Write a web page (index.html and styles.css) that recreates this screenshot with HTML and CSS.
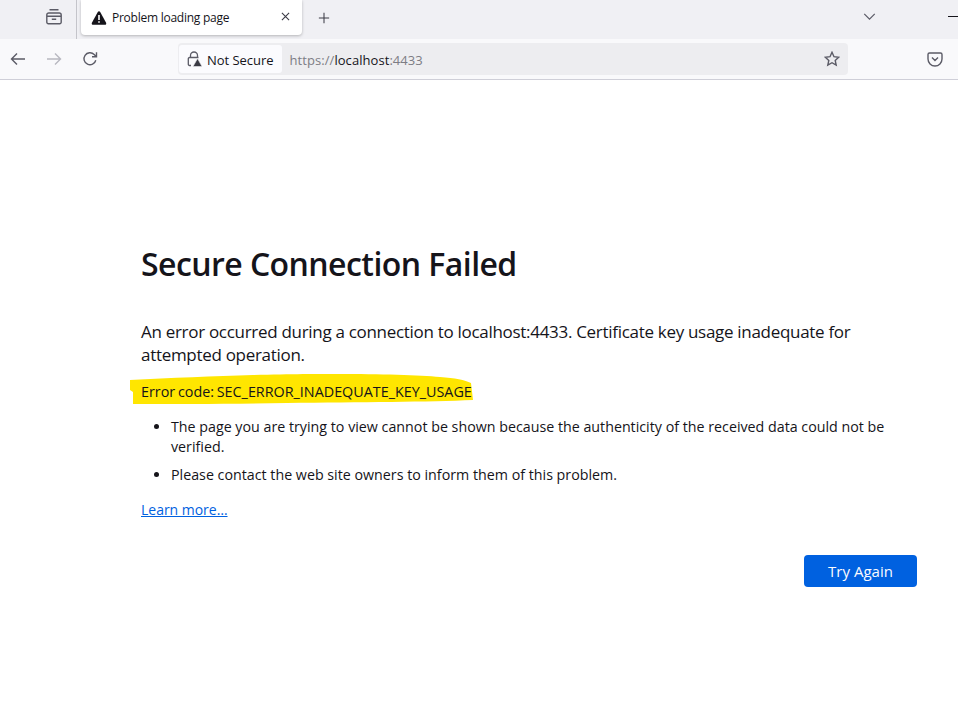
FILE: index.html
```html
<!DOCTYPE html>
<html lang="en">
<head>
<meta charset="utf-8">
<title>Problem loading page</title>
<link rel="stylesheet" href="styles.css">
</head>
<body>
<header class="chrome">
  <div class="tabbar">
    <div class="tabs-left">
      <svg class="ico view-icon" viewBox="0 0 16 16"><path d="M3.500 .8h9M.8 6v7.200a1.500 1.500 0 0 0 1.500 1.500h11.400a1.500 1.500 0 0 0 1.500-1.500V6a2 2 0 0 0-2-2H2.800a2 2 0 0 0-2 2zM.8 7.200h14.400M5.800 10.200h4.400"/></svg>
    </div>
    <div class="tab-sep"></div>
    <div class="tab">
      <svg class="warn" viewBox="0 0 16 16"><path class="warn-fill" d="M8 1.2c-.5 0-.9.3-1.200.7L.9 12.700c-.5 1 .1 2.100 1.200 2.100h11.800c1.100 0 1.700-1.100 1.200-2.100L9.200 1.900C8.900 1.500 8.500 1.200 8 1.200z"/><path class="warn-mark" d="M7.200 5h1.600v5H7.200zM7.200 11.200h1.600v1.600H7.200z"/></svg>
      <span class="tab-title">Problem loading page</span>
      <svg class="ico tab-close" viewBox="0 0 10 10"><path d="M1 1l8 8M9 1l-8 8"/></svg>
    </div>
    <svg class="ico new-tab" viewBox="0 0 14 14"><path d="M7 1v12M1 7h12"/></svg>
    <div class="spacer"></div>
    <svg class="ico chevron" viewBox="0 0 14 8"><path d="M1 1l6 6 6-6"/></svg>
    <div class="minimize"></div>
  </div>
  <nav class="navbar">
    <svg class="ico nav-btn back" viewBox="0 0 16 16"><path d="M15 8H1.500M7 2.500L1.500 8 7 13.500"/></svg>
    <svg class="ico nav-btn forward" viewBox="0 0 16 16"><path d="M1 8h13.500M9 2.500L14.500 8 9 13.500"/></svg>
    <svg class="ico nav-btn reload" viewBox="0 0 16 16"><path d="M13.800 9.300A6 6 0 1 1 12.200 3.500L14.200 5.500M14.500 1.200v4.500H10"/></svg>
    <div class="urlbar">
      <div class="identity">
        <svg class="lock" viewBox="0 0 16 16"><path class="lock-line" d="M4.500 6.500V4.500a3.500 3.500 0 0 1 7 0v2M5 14.500H3.500a1.200 1.200 0 0 1-1.200-1.200V7.700a1.200 1.200 0 0 1 1.200-1.200h9"/><path class="lock-warn" d="M11.500 7.500l4.500 8H7z"/></svg>
        <span class="identity-label">Not Secure</span>
      </div>
      <div class="url"><span class="dim">https://</span><span class="host">localhost</span><span class="dim">:4433</span></div>
      <svg class="ico star" viewBox="0 0 16 16"><path d="M8 1.300l2 4.400 4.700.5-3.500 3.200 1 4.700L8 11.700l-4.200 2.400 1-4.700L1.300 6.200 6 5.700z"/></svg>
    </div>
    <svg class="ico pocket" viewBox="0 0 16 16"><path d="M2.500 2h11A1.500 1.500 0 0 1 15 3.500V8a7 7 0 0 1-14 0V3.500A1.500 1.500 0 0 1 2.500 2zM5 6.500l3 3 3-3"/></svg>
  </nav>
</header>
<main class="page">
  <h1 class="title">Secure Connection Failed</h1>
  <p class="lead">An error occurred during a connection to localhost:4433. Certificate key usage inadequate for attempted operation.</p>
  <p class="code">
    <svg class="marker" viewBox="0 0 345 32" preserveAspectRatio="none"><path d="M0 6 C40 4 85 2 123 1 C160 0 190 0 207 0 C250 0 290 1 310 3 C325 4 335 6 341 9 L343 26 C300 28 230 28 157 29 C100 30 50 30 3 30 L3 18 L0 16z"/></svg>
    <span class="code-text">Error code: SEC_ERROR_INADEQUATE_KEY_USAGE</span>
  </p>
  <ul class="reasons">
    <li>The page you are trying to view cannot be shown because the authenticity of the received data could not be verified.</li>
    <li>Please contact the web site owners to inform them of this problem.</li>
  </ul>
  <a class="learn" href="#">Learn more…</a>
  <div class="actions"><button class="retry" type="button">Try Again</button></div>
</main>
</body>
</html>
```
FILE: styles.css
```css
* { box-sizing: border-box; }
html, body { margin: 0; height: 100%; }
body {
  background: #fff;
  color: #15141a;
  font-family: "Open Sans", "Noto Sans", sans-serif;
  overflow: hidden;
}
.ico { fill: none; stroke: #5b5b66; stroke-width: 1.4; flex: none; }

.tabbar {
  height: 39px;
  background: #f0f0f4;
  display: flex;
  align-items: flex-start;
}
.tabs-left { width: 76px; display: flex; justify-content: flex-end; padding: 9px 14px 0 0; }
.view-icon { width: 16px; height: 16px; }
.tab-sep { width: 1px; height: 39px; background: #c4c4ca; margin-right: 4px; }
.tab {
  width: 221px;
  height: 35px;
  background: #fff;
  border-radius: 0 0 4px 4px;
  box-shadow: 0 1px 3px rgba(0,0,0,.25);
  display: flex;
  align-items: center;
  padding: 0 12px 0 10px;
}
.warn { width: 16px; height: 16px; flex: none; margin-right: 5px; }
.warn-fill { fill: #15141a; }
.warn-mark { fill: #fff; }
.tab-title { font-size: 12px; flex: 1; letter-spacing: -.25px; }
.tab-close { width: 9px; height: 9px; stroke: #3a3a44; stroke-width: 1.2; margin-top: -2px; }
.new-tab { width: 12px; height: 12px; margin: 12px 0 0 16px; stroke-width: 1.200; stroke: #3a3a44; }
.spacer { flex: 1; }
.chevron { width: 13px; height: 7px; margin: 13px 72px 0 0; }
.minimize { width: 10px; height: 1px; background: #15141a; margin-top: 16px; }

.navbar {
  height: 41px;
  background: #f9f9fb;
  border-bottom: 1px solid #cfcfd8;
  display: flex;
  align-items: center;
  padding: 0 15px 0 0;
}
.nav-btn { width: 16px; height: 16px; margin-left: 10px; }
.back { margin-left: 10px; }
.forward { margin-left: 20px; stroke: #b8b8c0; }
.reload { margin-left: 20px; }
.urlbar {
  margin-left: 80px;
  width: 671px;
  height: 32px;
  background: #ededf0;
  border-radius: 4px;
  display: flex;
  align-items: center;
  padding: 0 8px 0 1px;
}
.identity {
  height: 28px;
  background: #fbfbfe;
  border-radius: 3px;
  display: flex;
  align-items: center;
  padding: 0 8px 0 7px;
}
.lock { width: 16px; height: 16px; margin-right: 5px; }
.lock-line { fill: none; stroke: #5b5b66; stroke-width: 1.3; }
.lock-warn { fill: #3a3a44; stroke: #ededf0; stroke-width: .6; }
.identity-label { font-size: 13px; letter-spacing: -.03px; padding-top: 1px; }
.url { flex: 1; font-size: 13px; letter-spacing: .06px; padding: 1px 0 0 8px; color: #15141a; }
.dim { color: #7d7d85; }
.star { width: 16px; height: 16px; }
.pocket { width: 16px; height: 16px; margin-left: 79px; }

.page { padding: 164px 41px 0 141px; }
.title { font-size: 32px; font-weight: 600; line-height: 40px; letter-spacing: -.56px; margin: 0 0 36px; }
.lead { font-size: 17px; line-height: 23px; letter-spacing: -.3px; margin: 0 0 16px; }
.code { position: relative; font-size: 14.35px; word-spacing: -1px; line-height: 20px; margin: 0 0 15px; }
.marker { position: absolute; left: -11px; top: -8px; width: 345px; height: 32px; fill: #ffe600; }
.code-text { position: relative; }
.reasons { font-size: 14.25px; line-height: 20px; margin: 0 0 13px; padding: 0 0 0 30px; }
.reasons li { margin-bottom: 8px; }
.learn { font-size: 14px; letter-spacing: -.02px; line-height: 20px; color: #0061e0; }
.actions { display: flex; justify-content: flex-end; margin-top: 35px; }
.retry {
  width: 113px;
  height: 32px;
  background: #0061e0;
  color: #fbfbfe;
  border: 0;
  border-radius: 4px;
  font: 500 15px "Open Sans", "Noto Sans", sans-serif;
}
```
